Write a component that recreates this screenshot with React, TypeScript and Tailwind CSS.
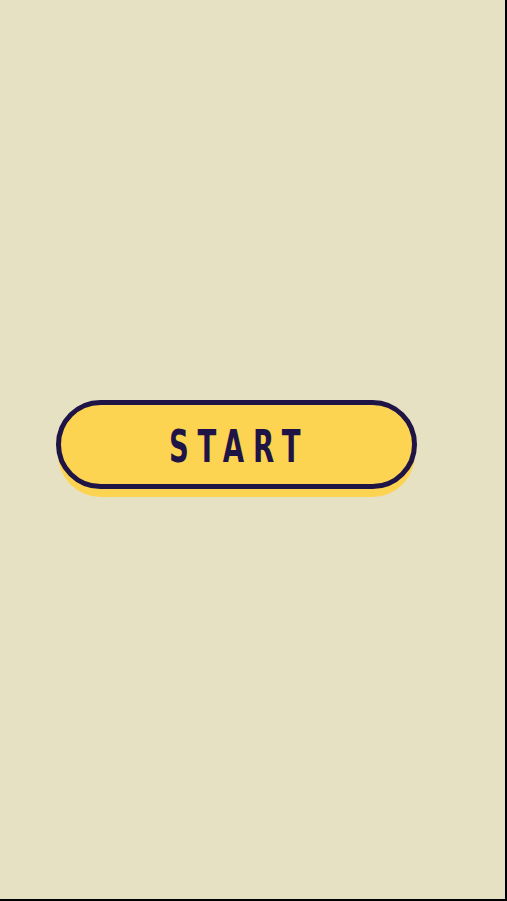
export default function App() {
  return (
    <div className="w-[507px] h-[901px] bg-[#e6e1c3] border-r-2 border-b-2 border-black flex items-center">
      <button
        className="ml-[56px] mb-[10px] w-[361px] h-[89px] rounded-full bg-[#fdd451] border-[5px] border-[#1f1446] shadow-[0_10px_0_-2px_#fdd451] flex items-center justify-center"
      >
        <span
          className="inline-block scale-x-[0.68] mt-[4px] text-[#1f1446] font-bold text-[45px] leading-none tracking-[13px] pl-[13px] ml-[-3px]"
          style={{ fontFamily: '"DejaVu Sans Condensed", "DejaVu Sans", sans-serif' }}
        >
          START
        </span>
      </button>
    </div>
  );
}
